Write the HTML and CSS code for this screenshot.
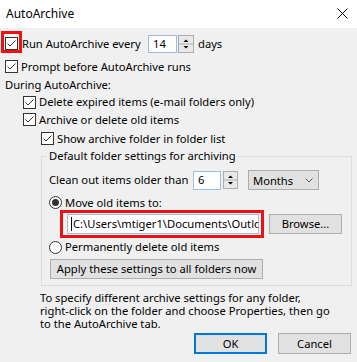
FILE: index.html
```html
<!DOCTYPE html>
<html lang="en">
<head>
  <meta charset="UTF-8">
  <title>AutoArchive</title>
  <link rel="stylesheet" href="styles.css">
</head>
<body>
  <div class="titlebar">
    <span class="title">AutoArchive</span>
    <svg class="close" width="11" height="11" viewBox="0 0 11 11"><path d="M0.5 0.5 L10.5 10.5 M10.5 0.5 L0.5 10.5"/></svg>
  </div>

  <div class="content">
    <div class="row row-run">
      <span class="mark">
        <span class="check"><svg viewBox="0 0 11 11"><polyline points="1.5,5.5 4,8 9.5,2.5"/></svg></span>
      </span>
      <span class="lbl lbl-every">Run AutoArchive every</span>
      <span class="field num">14</span>
      <span class="arrows">
        <svg viewBox="0 0 14 16"><path d="M4.5 6 L7 3.5 L9.5 6 Z M4.5 10 L7 12.5 L9.5 10 Z"/><line x1="0" y1="8" x2="14" y2="8"/></svg>
      </span>
      <span class="lbl unit">days</span>
    </div>

    <div class="row row-19">
      <span class="check"><svg viewBox="0 0 11 11"><polyline points="1.5,5.5 4,8 9.5,2.5"/></svg></span>
      <span class="lbl">Prompt before AutoArchive runs</span>
    </div>

    <div class="row row-18">
      <span class="lbl">During AutoArchive:</span>
    </div>

    <div class="row row-16 indent-1">
      <span class="check"><svg viewBox="0 0 11 11"><polyline points="1.5,5.5 4,8 9.5,2.5"/></svg></span>
      <span class="lbl">Delete expired items (e-mail folders only)</span>
    </div>

    <div class="row row-19 indent-1">
      <span class="check"><svg viewBox="0 0 11 11"><polyline points="1.5,5.5 4,8 9.5,2.5"/></svg></span>
      <span class="lbl">Archive or delete old items</span>
    </div>

    <div class="row row-19 indent-2">
      <span class="check"><svg viewBox="0 0 11 11"><polyline points="1.5,5.5 4,8 9.5,2.5"/></svg></span>
      <span class="lbl">Show archive folder in folder list</span>
    </div>

    <fieldset class="group">
      <legend>Default folder settings for archiving</legend>

      <div class="row row-clean">
        <span class="lbl lbl-older">Clean out items older than</span>
        <span class="field num num-small">6</span>
        <span class="arrows arrows-small">
          <svg viewBox="0 0 13 16"><path d="M4 6 L6.5 3.5 L9 6 Z M4 10 L6.5 12.5 L9 10 Z"/><line x1="0" y1="8" x2="13" y2="8"/></svg>
        </span>
        <span class="combo">
          <span>Months</span>
          <svg width="8" height="5" viewBox="0 0 8 5"><polyline points="0.5,0.5 4,4 7.5,0.5"/></svg>
        </span>
      </div>

      <div class="row row-19">
        <span class="radio on"></span>
        <span class="lbl">Move old items to:</span>
      </div>

      <div class="row row-path">
        <span class="mark-path">
          <span class="field path"><span class="caret"></span>C:\Users\mtiger1\Documents\Outlook Files\archive.pst</span>
        </span>
        <button class="btn btn-browse">Browse...</button>
      </div>

      <div class="row row-18">
        <span class="radio"></span>
        <span class="lbl">Permanently delete old items</span>
      </div>

      <button class="btn btn-apply">Apply these settings to all folders now</button>
    </fieldset>

    <p class="note">To specify different archive settings for any folder,<br>right-click on the folder and choose Properties, then go<br>to the AutoArchive tab.</p>

    <div class="actions">
      <button class="btn btn-ok">OK</button>
      <button class="btn">Cancel</button>
    </div>
  </div>
</body>
</html>
```

FILE: styles.css
```css
body {
  margin: 0;
  font-family: "Noto Sans", "Open Sans", sans-serif;
  font-size: 11.2px;
  color: #000;
  background-color: #f0f0f0;
}

.titlebar {
  height: 28px;
  background-color: #fff;
  display: flex;
  align-items: center;
  justify-content: space-between;
  padding: 0 9px 1px 6px;
  box-sizing: border-box;
  font-size: 12px;
}

.close path {
  stroke: #000;
  stroke-width: 1;
  fill: none;
}

.content {
  padding: 3px 5px 0 5px;
}

.row {
  display: flex;
  align-items: center;
}

.lbl {
  line-height: 16px;
  white-space: nowrap;
}

.row-run { height: 26px; }
.row-19 { height: 19px; }
.row-18 { height: 18px; }
.row-16 { height: 16px; }

.indent-1 { margin-left: 18px; }
.indent-2 { margin-left: 36px; }

/* checkbox and radio */
.check {
  width: 13px;
  height: 13px;
  box-sizing: border-box;
  border: 1px solid #333;
  background-color: #fff;
  margin-right: 3px;
  flex-shrink: 0;
}

.check svg {
  display: block;
  width: 11px;
  height: 11px;
}

.check polyline {
  fill: none;
  stroke: #333;
  stroke-width: 1;
}

.radio {
  width: 13px;
  height: 13px;
  box-sizing: border-box;
  border: 1px solid #333;
  border-radius: 50%;
  background-color: #fff;
  margin-right: 3px;
  display: flex;
  align-items: center;
  justify-content: center;
}

.radio.on::after {
  content: "";
  width: 7px;
  height: 7px;
  border-radius: 50%;
  background-color: #333;
}

/* red highlight boxes */
.mark {
  align-self: flex-start;
  margin-left: -4px;
  border: 3px solid #ee1111;
  padding: 3px 1px 0 1px;
}

.mark .check {
  display: block;
  margin-right: 0;
}

.mark-path {
  margin-left: 11px;
  border: 3px solid #ee1111;
  padding: 1px 2px 1px 4px;
}

/* text fields and spinners */
.field {
  display: block;
  box-sizing: border-box;
  background-color: #fff;
  border: 1px solid #9dbfe3;
  line-height: 16px;
  padding: 0 4px;
  white-space: nowrap;
  overflow: hidden;
}

.num {
  width: 29px;
  height: 18px;
}

.num-small {
  width: 28px;
  height: 19px;
}

.lbl-every { width: 126px; }
.lbl-older { width: 144px; }

.arrows {
  width: 16px;
  height: 18px;
  box-sizing: border-box;
  border: 1px solid #adadad;
  background-color: #e9e9e9;
  margin-left: 1px;
}

.arrows svg {
  display: block;
  width: 14px;
  height: 16px;
}

.arrows path {
  fill: #000;
}

.arrows line {
  stroke: #adadad;
  stroke-width: 1;
}

.arrows-small {
  width: 15px;
  margin-left: 2px;
}

.arrows-small svg {
  width: 13px;
}

.unit {
  margin-left: 4px;
}

.combo {
  width: 71px;
  height: 20px;
  box-sizing: border-box;
  margin-left: 10px;
  border: 1px solid #adadad;
  background-color: #e1e1e1;
  display: flex;
  align-items: center;
  justify-content: space-between;
  padding: 0 5px 0 4px;
}

.combo polyline {
  fill: none;
  stroke: #555;
  stroke-width: 1;
}

/* group box */
.group {
  margin: 0 0 0 36px;
  padding: 0 7px 6px 7px;
  border: 1px solid #dcdcdc;
  min-width: 0;
}

.group legend {
  padding: 0 2px;
  margin-left: -2px;
  line-height: 16px;
}

.row-clean {
  height: 26px;
  margin-top: 3px;
}

.row-path {
  margin-top: -2px;
}

.path {
  width: 192px;
  height: 20px;
  padding: 1px 0 0 3px;
}

.caret {
  display: inline-block;
  width: 1px;
  height: 14px;
  background-color: #000;
  vertical-align: -3px;
  margin-right: 1px;
}

/* buttons */
.btn {
  font-family: inherit;
  font-size: 11.2px;
  color: #000;
  background-color: #e1e1e1;
  border: 1px solid #adadad;
  width: 73px;
  height: 21px;
  padding: 0;
  line-height: 16px;
  white-space: nowrap;
}

.btn-browse {
  height: 20px;
  margin-left: 5px;
}

.btn-apply {
  display: block;
  width: 213px;
  height: 20px;
  margin: 3px 0 0 1px;
}

.btn-ok {
  border: 2px solid #0078d7;
}

.note {
  margin: 5px 0 0 35px;
  line-height: 13px;
}

.actions {
  display: flex;
  justify-content: flex-end;
  gap: 11px;
  margin: 3px 1px 0 0;
}
```
